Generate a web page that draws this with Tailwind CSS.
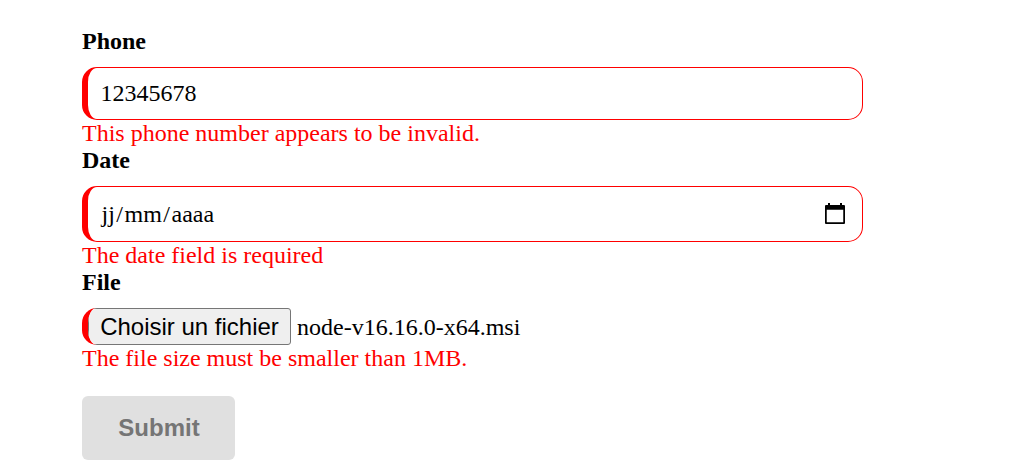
<!DOCTYPE html>
<html lang="en">
<head>
<meta charset="utf-8">
<title>Form</title>
<script src="https://cdn.jsdelivr.net/npm/@tailwindcss/browser@4"></script>
</head>
<body class="bg-white text-black">
<form class="ml-[82px] w-[781px] pt-[28px] font-['Liberation_Serif',serif] text-[24px] leading-[27px] whitespace-nowrap">
  <div class="h-[119px]">
    <div class="font-bold h-[39px]">Phone</div>
    <div class="flex items-center h-[53px] border border-l-[6px] border-[#ff0000] rounded-[15px] pl-[12.5px]">12345678</div>
    <div class="text-[#ff0000]">This phone number appears to be invalid.</div>
  </div>
  <div class="h-[122px]">
    <div class="font-bold h-[39px]">Date</div>
    <div class="flex items-center justify-between h-[56px] border border-l-[6px] border-[#ff0000] rounded-[15px] pl-[12px] pr-[17px]">
      <span class="flex"><span class="px-[1.5px]">jj</span><span>/</span><span class="px-[1.5px]">mm</span><span>/</span><span class="px-[1.5px]">aaaa</span></span>
      <svg class="w-[20px] h-[21px] mb-[2px]" viewBox="0 0 20 21" fill="none"><path d="M3 0h2v2h10V0h2v2h2a1 1 0 0 1 1 1v17a1 1 0 0 1-1 1H1a1 1 0 0 1-1-1V3a1 1 0 0 1 1-1h2zM1.75 6.7v12.55h16.5V6.7z" fill="#000" fill-rule="evenodd"/></svg>
    </div>
    <div class="text-[#ff0000]">The date field is required</div>
  </div>
  <div class="h-[127px]">
    <div class="font-bold h-[39px]">File</div>
    <div class="flex items-center h-[37px] border-l-[6px] border-[#ff0000] rounded-[15px] overflow-hidden">
      <span class="flex items-center justify-center h-[37px] w-[203px] bg-[#efefef] border border-[#767676] rounded-[3px] font-['Liberation_Sans',sans-serif]">Choisir un fichier</span>
      <span class="ml-[6px] pt-[2px]">node-v16.16.0-x64.msi</span>
    </div>
    <div class="text-[#ff0000]">The file size must be smaller than 1MB.</div>
  </div>
  <button type="button" disabled class="block w-[153px] h-[64px] rounded-[6px] bg-[#e0e0e0] text-[#757575] font-['Liberation_Sans',sans-serif] font-bold pb-[2px] pl-[1px]">Submit</button>
</form>
</body>
</html>
